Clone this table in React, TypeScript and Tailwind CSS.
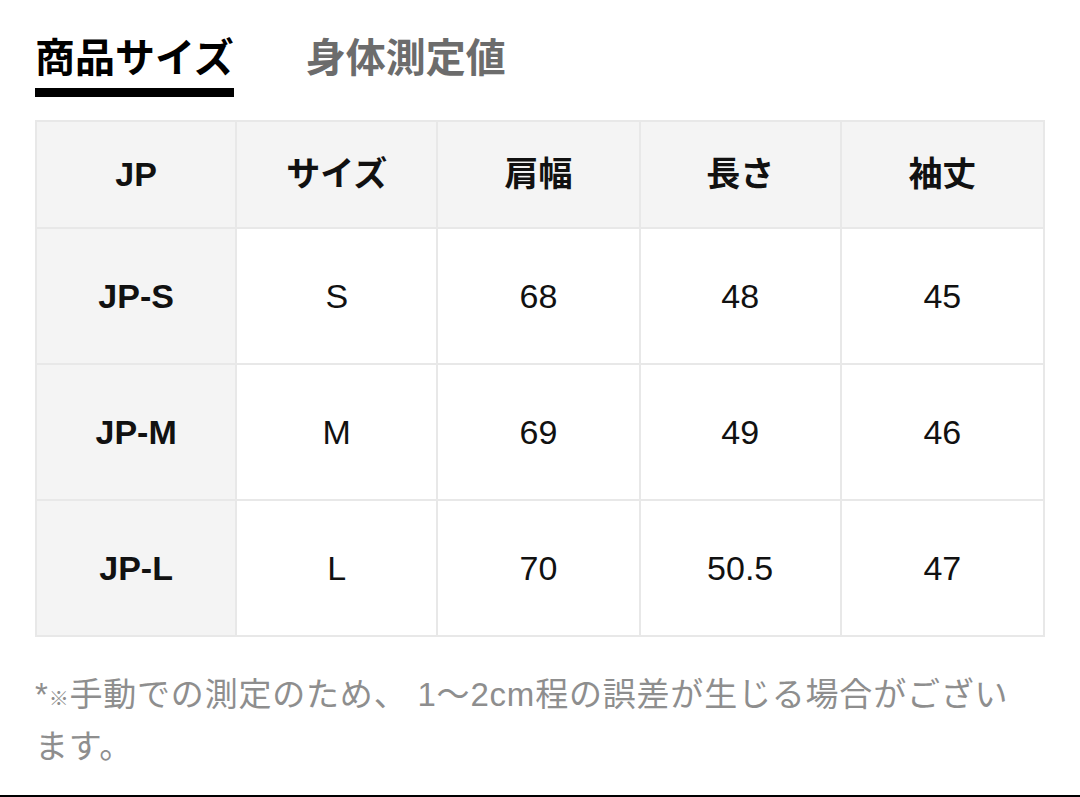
const HEADERS = ['JP', 'サイズ', '肩幅', '長さ', '袖丈']
const COL_WIDTHS = ['w-[200px]', 'w-[201px]', 'w-[202px]', 'w-[201px]', 'w-[203px]']

const ROWS = [
  ['JP-S', 'S', '68', '48', '45'],
  ['JP-M', 'M', '69', '49', '46'],
  ['JP-L', 'L', '70', '50.5', '47'],
]

export default function App() {
  return (
    <div className="flex min-h-screen flex-col bg-white text-[#111] [font-family:'Liberation_Sans','Noto_Sans_CJK_JP',sans-serif]">
      <div className="px-[35px] pt-[31px]">
        {/* tabs */}
        <div className="flex gap-[69px] [font-family:'Noto_Sans_CJK_JP',sans-serif] text-[40px] font-bold">
          <div className="flex flex-col pr-[3px]">
            <span className="leading-[48px] text-black">商品サイズ</span>
            <div className="mt-[9px] h-[9px] bg-black" />
          </div>
          <div className="flex flex-col">
            <span className="leading-[48px] text-[#6c6c6c]">身体測定値</span>
          </div>
        </div>

        {/* size table */}
        <table className="mt-[23px] w-[1010px] table-fixed border-collapse border-2 border-[#e8e8e8] text-[34px]">
          <colgroup>
            {COL_WIDTHS.map(w => <col key={w} className={w} />)}
          </colgroup>
          <thead>
            <tr className="h-[107px] bg-[#f4f4f4]">
              {HEADERS.map(h => (
                <th key={h} className="border-2 border-[#e8e8e8] text-center font-bold">{h}</th>
              ))}
            </tr>
          </thead>
          <tbody>
            {ROWS.map(row => (
              <tr key={row[0]} className="h-[136px]">
                {row.map((cell, i) => (
                  <td
                    key={i}
                    className={i === 0
                      ? 'border-2 border-[#e8e8e8] bg-[#f4f4f4] text-center font-bold'
                      : 'border-2 border-[#e8e8e8] text-center'}
                  >
                    {cell}
                  </td>
                ))}
              </tr>
            ))}
          </tbody>
        </table>

        <p className="mt-[34px] whitespace-nowrap text-[33px] leading-[48px] tracking-[0.8px] text-[#8e8e8e]">
          *<span className="text-[20px]">※</span>手動での測定のため、 1〜2cm程の誤差が生じる場合がござい
          <br />
          ます。
        </p>
      </div>
      <div className="mt-auto h-[2px] bg-black" />
    </div>
  )
}
